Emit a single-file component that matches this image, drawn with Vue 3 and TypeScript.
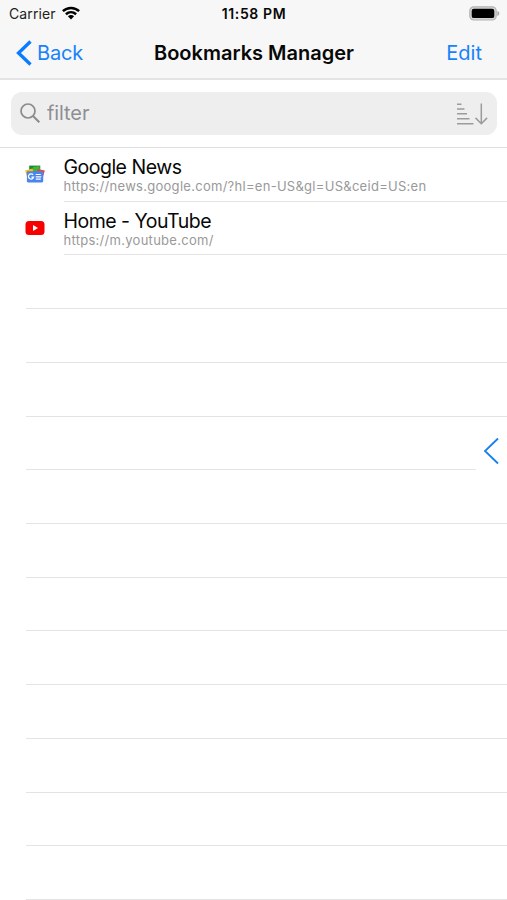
<script setup lang="ts">
import { ref, computed } from 'vue'

interface Bookmark {
  title: string
  url: string
  icon: 'news' | 'youtube'
}

const bookmarks: Bookmark[] = [
  { title: 'Google News', url: 'https://news.google.com/?hl=en-US&gl=US&ceid=US:en', icon: 'news' },
  { title: 'Home - YouTube', url: 'https://m.youtube.com/', icon: 'youtube' },
]
const query = ref('')
const visible = computed(() =>
  bookmarks.filter((b) => (b.title + b.url).toLowerCase().includes(query.value.toLowerCase())),
)
const emptyRows = computed(() => 14 - visible.value.length)
</script>

<template>
  <div class="screen">
    <header class="top">
      <div class="status">
        <div class="carrier">
          <span>Carrier</span>
          <svg class="wifi" viewBox="0 0 18 14" width="18" height="14">
            <g fill="none" stroke="#000" stroke-width="2.5">
              <path d="M.9 5.1C5.5.8 12.500.8 17.100 5.100" />
              <path d="M3.900 8.200C6.900 5.500 11.100 5.500 14.100 8.200" />
            </g>
            <path d="M5.900 10.200C7.700 8.600 10.300 8.600 12.100 10.200L9 13.400Z" />
          </svg>
        </div>
        <span class="time">11:58 PM</span>
        <svg class="battery" viewBox="0 0 31 15" width="31" height="15">
          <rect x=".8" y=".8" width="26.400" height="13.200" rx="4" fill="#d4d4d4" stroke="#b4b4b4" stroke-width="1.200" />
          <rect x="2.700" y="2.700" width="22.600" height="9.400" rx="2.200" />
          <path d="M28.300 5v5c1.600-.6 2-1.500 2-2.500s-.4-1.900-2-2.500Z" fill="#aaa" />
        </svg>
      </div>
      <nav class="nav">
        <a class="back">
          <svg viewBox="0 0 16 26" width="16" height="26">
            <path d="M14.500 1.500L2.500 13 14.500 24.500" fill="none" stroke="#0a7cff" stroke-width="3.300" />
          </svg>
          <span>Back</span>
        </a>
        <h1>Bookmarks Manager</h1>
        <a class="edit">Edit</a>
      </nav>
    </header>

    <div class="search">
      <label class="field">
        <svg viewBox="0 0 20 20" width="20" height="20" fill="none" stroke="#8b8b8f" stroke-width="1.700">
          <circle cx="8" cy="8" r="7" />
          <path d="M13 13l6.300 6.300" stroke-width="2" />
        </svg>
        <input v-model="query" placeholder="filter" />
        <svg class="sort" viewBox="0 0 32 24" width="32" height="24" fill="none" stroke="#9b9b9b" stroke-width="1.500">
          <path d="M1 2.300h4.500M1 7h7.500M1 11.800h10M1 16.800h12.500M1 21.800h16.500" />
          <path d="M25.300 1.500v20.200M19.500 15.900l5.800 5.800 5.800-5.800" />
        </svg>
      </label>
    </div>

    <main class="list">
      <div v-for="b in visible" :key="b.url" class="row">
        <div class="icon">
          <svg v-if="b.icon === 'news'" viewBox="0.500 0.500 19 17" width="20" height="18">
            <path d="M4.500 1h10.500v6H4.500z" fill="#168a42" />
            <path d="M8 2.300l6-1 1 5H8z" fill="#45b52f" />
            <path d="M.7 5.700l7-2 2 9-6.500 2z" fill="#f9bd16" />
            <path d="M19.300 5.700l-7-1.500-2 8.500 6.500 2z" fill="#e84438" />
            <rect x="2.300" y="6.300" width="15.500" height="10.700" rx="1" fill="#4a84ee" />
            <path d="M8.200 9.700A2.500 2.500 0 1 0 8.700 12H6.600" fill="none" stroke="#fff" stroke-width="1.200" />
            <path d="M10.700 9.500h4.800M10.700 11.700h5.300M10.700 13.800h4.800" stroke="#fff" stroke-width="1.100" />
          </svg>
          <svg v-else viewBox="0 0 20 16" width="20" height="16">
            <rect x=".5" y="1" width="19" height="14" rx="3.500" fill="#f80000" />
            <path d="M8 5l5 3-5 3z" fill="#fff" />
          </svg>
        </div>
        <div class="text">
          <div class="name">{{ b.title }}</div>
          <div class="url">{{ b.url }}</div>
        </div>
      </div>
      <div v-for="n in emptyRows" :key="n" class="row"><div class="rule" /></div>
      <button class="drawer" aria-label="Open panel">
        <svg viewBox="0 0 16 28" width="16" height="28">
          <path d="M15 1.500L2 14l13 12.500" fill="none" stroke="#1680ee" stroke-width="1.800" />
        </svg>
      </button>
    </main>
  </div>
</template>

<style>
body { margin: 0; background: #fff; }
</style>

<style scoped>
.screen {
  position: relative;
  box-sizing: border-box;
  width: 100%;
  height: 900px;
  overflow: hidden;
  background: #fff;
  color: #080808;
  font-family: Inter, "Liberation Sans", sans-serif;
}
.top {
  box-sizing: border-box;
  height: 80px;
  background: #f7f7f7;
  border-bottom: 2px solid #e4e4e4;
}
.status {
  display: grid;
  grid-template-columns: 1fr auto 1fr;
  align-items: center;
  height: 27px;
  padding: 0 7px 0 8px;
}
.carrier { display: flex; align-items: center; gap: 6px; padding-left: 1px; font-size: 14px; letter-spacing: .1px; color: #222; }
.wifi { margin-top: -2px; }
.time { font-size: 14px; font-weight: 600; letter-spacing: .65px; }
.battery { justify-self: end; }
.nav {
  display: grid;
  grid-template-columns: 1fr auto 1fr;
  align-items: center;
  height: 51px;
  padding: 0 15px 0 16px;
  font-size: 20px;
}
.back { display: flex; align-items: center; gap: 5px; color: #1683fb; letter-spacing: -.15px; }
.edit { justify-self: end; margin-right: 10px; color: #1683fb; }
h1 { margin: 0; font-size: 20px; font-weight: 600; }
.search {
  box-sizing: border-box;
  height: 68px;
  padding: 12px 10px 12px 11px;
  border-bottom: 1px solid #dedede;
}
.field {
  box-sizing: border-box;
  display: flex;
  align-items: center;
  height: 43px;
  padding: 0 9px 2px;
  border-radius: 11px;
  background: #eee;
}
input {
  flex: 1;
  min-width: 0;
  padding: 0;
  margin-left: 7px;
  border: 0;
  outline: 0;
  background: none;
  font: inherit;
  font-size: 20px;
  letter-spacing: -.1px;
}
input::placeholder { color: #8e8e93; opacity: 1; }
.sort { margin-top: 2px; }
.row { display: flex; height: 53.72px; }
.icon { box-sizing: border-box; display: flex; flex: none; align-items: center; width: 63.500px; padding: 0 0 1px 25px; }
.text { box-sizing: border-box; flex: 1; padding-top: 7px; border-bottom: 1px solid #e4e4e4; }
.name { height: 23px; font-size: 19.500px; line-height: 24px; letter-spacing: -.5px; white-space: nowrap; }
.url { height: 16px; font-size: 13px; line-height: 16px; letter-spacing: .28px; color: #999; white-space: nowrap; }
.rule { box-sizing: border-box; flex: 1; margin-left: 26px; border-bottom: 1px solid #e4e4e4; }
.drawer {
  position: absolute;
  top: 430px;
  right: 0;
  display: flex;
  align-items: center;
  width: 31px;
  height: 41px;
  padding: 0 0 0 7px;
  border: 0;
  background: #fff;
}
</style>
